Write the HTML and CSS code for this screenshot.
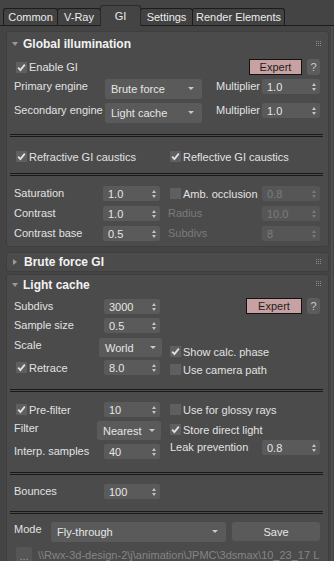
FILE: index.html
```html
<!DOCTYPE html>
<html>
<head>
<meta charset="utf-8">
<link rel="stylesheet" href="styles.css">
</head>
<body>
<div class="tabs">
  <div class="tab t-common">Common</div>
  <div class="tab t-vray">V-Ray</div>
  <div class="tab t-gi active">GI</div>
  <div class="tab t-settings">Settings</div>
  <div class="tab t-re">Render Elements</div>
</div>
<div class="scroll"></div>
<div class="rollouts">
  <section class="panel p-gi">
    <div class="head h-gi">
      <svg class="tri" width="6" height="4" viewBox="0 0 6 4"><path d="M0 0H6L3 4Z" fill="#9a9a9a"/></svg>
      <span class="title">Global illumination</span>
      <svg class="grip" width="5" height="5" viewBox="0 0 5 5"><g fill="#8a8a8a"><rect x="0" y="0" width="1" height="1"/><rect x="2" y="0" width="1" height="1"/><rect x="4" y="0" width="1" height="1"/><rect x="0" y="2" width="1" height="1"/><rect x="2" y="2" width="1" height="1"/><rect x="4" y="2" width="1" height="1"/><rect x="0" y="4" width="1" height="1"/><rect x="2" y="4" width="1" height="1"/><rect x="4" y="4" width="1" height="1"/></g></svg>
    </div>
    <div class="row r-enable">
      <label class="chk ml2"><svg class="cb" width="11" height="11" viewBox="0 0 11 11"><rect width="11" height="11" fill="#5f5f5f"/><path d="M2.2 5.6L4.4 8L8.8 2.6" fill="none" stroke="#e2e2e2" stroke-width="1.8"/></svg><span>Enable GI</span></label>
      <div class="expert e-gi">Expert</div>
      <div class="help">?</div>
    </div>
    <div class="row r-primary">
      <span class="lbl w91">Primary engine</span>
      <div class="dd w97">Brute force</div>
      <span class="lbl w46 ml14">Multiplier</span>
      <div class="spin w58"><span>1.0</span><i class="ud"></i></div>
    </div>
    <div class="row r-secondary">
      <span class="lbl w91">Secondary engine</span>
      <div class="dd w97">Light cache</div>
      <span class="lbl w46 ml14">Multiplier</span>
      <div class="spin w58"><span>1.0</span><i class="ud"></i></div>
    </div>
    <div class="sep s1"></div>
    <div class="row r-caustics">
      <div class="col-l">
        <label class="chk ml2"><svg class="cb" width="11" height="11" viewBox="0 0 11 11"><rect width="11" height="11" fill="#5f5f5f"/><path d="M2.2 5.6L4.4 8L8.8 2.6" fill="none" stroke="#e2e2e2" stroke-width="1.8"/></svg><span>Refractive GI caustics</span></label>
      </div>
      <div class="col-r">
        <label class="chk"><svg class="cb" width="11" height="11" viewBox="0 0 11 11"><rect width="11" height="11" fill="#5f5f5f"/><path d="M2.2 5.6L4.4 8L8.8 2.6" fill="none" stroke="#e2e2e2" stroke-width="1.8"/></svg><span>Reflective GI caustics</span></label>
      </div>
    </div>
    <div class="sep s2"></div>
    <div class="row r-sat">
      <span class="lbl w89">Saturation</span>
      <div class="spin w57"><span>1.0</span><i class="ud"></i></div>
      <label class="chk w92 ml10"><svg class="cb" width="11" height="11" viewBox="0 0 11 11"><rect width="11" height="11" fill="#5f5f5f"/></svg><span>Amb. occlusion</span></label>
      <div class="spin w58 off"><span>0.8</span><i class="ud"></i></div>
    </div>
    <div class="row r-con">
      <span class="lbl w89">Contrast</span>
      <div class="spin w57"><span>1.0</span><i class="ud"></i></div>
      <span class="lbl w94 ml8 dis">Radius</span>
      <div class="spin w58 off"><span>10.0</span><i class="ud"></i></div>
    </div>
    <div class="row r-con">
      <span class="lbl w89">Contrast base</span>
      <div class="spin w57"><span>0.5</span><i class="ud"></i></div>
      <span class="lbl w94 ml8 dis">Subdivs</span>
      <div class="spin w58 off"><span>8</span><i class="ud"></i></div>
    </div>
  </section>

  <section class="panel p-bf">
    <div class="head h-bf">
      <svg class="tri" width="4" height="6" viewBox="0 0 4 6"><path d="M0 0L4 3L0 6Z" fill="#9a9a9a"/></svg>
      <span class="title">Brute force GI</span>
      <svg class="grip" width="5" height="5" viewBox="0 0 5 5"><g fill="#8a8a8a"><rect x="0" y="0" width="1" height="1"/><rect x="2" y="0" width="1" height="1"/><rect x="4" y="0" width="1" height="1"/><rect x="0" y="2" width="1" height="1"/><rect x="2" y="2" width="1" height="1"/><rect x="4" y="2" width="1" height="1"/><rect x="0" y="4" width="1" height="1"/><rect x="2" y="4" width="1" height="1"/><rect x="4" y="4" width="1" height="1"/></g></svg>
    </div>
  </section>

  <section class="panel p-lc">
    <div class="head h-lc">
      <svg class="tri" width="6" height="4" viewBox="0 0 6 4"><path d="M0 0H6L3 4Z" fill="#9a9a9a"/></svg>
      <span class="title">Light cache</span>
      <svg class="grip" width="5" height="5" viewBox="0 0 5 5"><g fill="#8a8a8a"><rect x="0" y="0" width="1" height="1"/><rect x="2" y="0" width="1" height="1"/><rect x="4" y="0" width="1" height="1"/><rect x="0" y="2" width="1" height="1"/><rect x="2" y="2" width="1" height="1"/><rect x="4" y="2" width="1" height="1"/><rect x="0" y="4" width="1" height="1"/><rect x="2" y="4" width="1" height="1"/><rect x="4" y="4" width="1" height="1"/></g></svg>
    </div>
    <div class="group">
      <div class="col-l">
        <div class="row mt5">
          <span class="lbl w90">Subdivs</span>
          <div class="spin w56"><span>3000</span><i class="ud"></i></div>
        </div>
        <div class="row mt4">
          <span class="lbl w90">Sample size</span>
          <div class="spin w56"><span>0.5</span><i class="ud"></i></div>
        </div>
        <div class="row mt5">
          <span class="lbl w85">Scale</span>
          <div class="dd dd-s w63">World</div>
        </div>
        <div class="row mt3">
          <label class="chk ml2 w88"><svg class="cb" width="11" height="11" viewBox="0 0 11 11"><rect width="11" height="11" fill="#5f5f5f"/><path d="M2.2 5.6L4.4 8L8.8 2.6" fill="none" stroke="#e2e2e2" stroke-width="1.8"/></svg><span>Retrace</span></label>
          <div class="spin w56"><span>8.0</span><i class="ud"></i></div>
        </div>
      </div>
      <div class="col-r">
        <div class="row end mt4">
          <div class="expert e-lc">Expert</div>
          <div class="help">?</div>
        </div>
        <div class="row mt30">
          <label class="chk"><svg class="cb" width="11" height="11" viewBox="0 0 11 11"><rect width="11" height="11" fill="#5f5f5f"/><path d="M2.2 5.6L4.4 8L8.8 2.6" fill="none" stroke="#e2e2e2" stroke-width="1.8"/></svg><span>Show calc. phase</span></label>
        </div>
        <div class="row mt3">
          <label class="chk"><svg class="cb" width="11" height="11" viewBox="0 0 11 11"><rect width="11" height="11" fill="#5f5f5f"/></svg><span>Use camera path</span></label>
        </div>
      </div>
    </div>
    <div class="sep s3"></div>
    <div class="group">
      <div class="col-l">
        <div class="row mt10">
          <label class="chk ml2 w88"><svg class="cb" width="11" height="11" viewBox="0 0 11 11"><rect width="11" height="11" fill="#5f5f5f"/><path d="M2.2 5.6L4.4 8L8.8 2.6" fill="none" stroke="#e2e2e2" stroke-width="1.8"/></svg><span>Pre-filter</span></label>
          <div class="spin w56"><span>10</span><i class="ud"></i></div>
        </div>
        <div class="row mt4">
          <span class="lbl w83">Filter</span>
          <div class="dd dd-s w64">Nearest</div>
        </div>
        <div class="row mt4">
          <span class="lbl w90">Interp. samples</span>
          <div class="spin w56"><span>40</span><i class="ud"></i></div>
        </div>
      </div>
      <div class="col-r">
        <div class="row mt10">
          <label class="chk"><svg class="cb" width="11" height="11" viewBox="0 0 11 11"><rect width="11" height="11" fill="#5f5f5f"/></svg><span>Use for glossy rays</span></label>
        </div>
        <div class="row mt5">
          <label class="chk"><svg class="cb" width="11" height="11" viewBox="0 0 11 11"><rect width="11" height="11" fill="#5f5f5f"/><path d="M2.2 5.6L4.4 8L8.8 2.6" fill="none" stroke="#e2e2e2" stroke-width="1.8"/></svg><span>Store direct light</span></label>
        </div>
        <div class="row mt3">
          <span class="lbl w92">Leak prevention</span>
          <div class="spin w58"><span>0.8</span><i class="ud"></i></div>
        </div>
      </div>
    </div>
    <div class="sep s4"></div>
    <div class="row mt9">
      <span class="lbl w90">Bounces</span>
      <div class="spin w56"><span>100</span><i class="ud"></i></div>
    </div>
    <div class="sep s5"></div>
    <div class="row mt8">
      <span class="lbl w37">Mode</span>
      <div class="dd w175">Fly-through</div>
      <div class="save">Save</div>
    </div>
    <div class="row mt5 last">
      <div class="dots">...</div>
      <span class="path">\\Rwx-3d-design-2\j\animation\JPMC\3dsmax\10_23_17 L</span>
    </div>
  </section>
</div>
</body>
</html>
```

FILE: styles.css
```css
* { box-sizing: border-box; }

html, body {
  margin: 0;
  padding: 0;
}

body {
  width: 334px;
  height: 561px;
  overflow: hidden;
  position: relative;
  background: #444444;
  color: #e2e2e2;
  font-family: "Liberation Sans", Arial, sans-serif;
  font-size: 11px;
}

/* tabs */
.tabs {
  display: flex;
  align-items: flex-end;
  height: 26px;
  padding-left: 3px;
  border-bottom: 1px solid #1c1c1c;
}

.tab {
  flex: none;
  height: 17px;
  margin-right: -1px;
  border: 1px solid #1c1c1c;
  border-bottom: 0;
  border-radius: 3px 3px 0 0;
  display: flex;
  align-items: center;
  justify-content: center;
  color: #ececec;
  font-size: 11px;
  background: #424242;
}

.tab.active {
  height: 21px;
  margin-bottom: -1px;
  background: #444444;
  border-color: #2a2a2a;
  position: relative;
  z-index: 1;
}

.t-common { width: 55px; }
.t-vray { width: 44px; }
.t-gi { width: 41px; }
.t-settings { width: 53px; }
.t-re { width: 93px; }

.scroll {
  position: absolute;
  right: 1px;
  top: 26px;
  width: 2px;
  bottom: 0;
  background: #4f4f4f;
}

/* rollouts */
.rollouts {
  padding: 5px 5px 0 6px;
}

.panel {
  background: #4b4b4b;
  border: 1px solid #3e3e3e;
  border-radius: 3px;
  padding: 0 8px 0 7px;
}

.p-gi { padding-bottom: 5px; }
.p-bf { margin-top: 5px; }
.p-lc { margin-top: 2px; }

.head {
  display: flex;
  align-items: center;
  color: #f2f2f2;
  font-weight: bold;
  font-size: 12px;
  margin: 0 -1px;
}

.h-gi { height: 24px; }
.h-bf { height: 18px; }
.h-lc { height: 19px; }

.tri { flex: none; margin-left: -1px; }
.h-bf .tri { margin-left: 0; margin-right: 2px; }
.title { margin-left: 5px; }
.grip { margin-left: auto; margin-top: -2px; margin-right: 0; }

.row {
  display: flex;
  align-items: flex-start;
}

.group {
  display: flex;
  align-items: flex-start;
}

.col-l { width: 146px; flex: none; }
.col-r { width: 150px; flex: none; margin-left: 10px; }

.end { justify-content: flex-end; }

.lbl {
  flex: none;
  height: 15px;
  line-height: 15px;
  white-space: nowrap;
}

.dis { color: #7b7b7b; }

.chk {
  flex: none;
  display: flex;
  align-items: center;
  height: 15px;
  white-space: nowrap;
}

.cb { flex: none; margin-right: 2px; }

.spin {
  flex: none;
  height: 15px;
  background: #5a5a5a;
  border-radius: 2px;
  display: flex;
  align-items: center;
  justify-content: space-between;
  padding: 0 4px 0 5px;
  color: #e6e6e6;
}

.spin.off { background: #565656; color: #7d7d7d; }

.ud {
  display: flex;
  flex-direction: column;
  gap: 2px;
}

.ud::before, .ud::after {
  content: "";
  display: block;
  border-left: 2px solid transparent;
  border-right: 2px solid transparent;
}

.ud::before { border-bottom: 3px solid #c4c4c4; }
.ud::after { border-top: 3px solid #c4c4c4; }
.off .ud::before { border-bottom-color: #7a7a7a; }
.off .ud::after { border-top-color: #7a7a7a; }

.dd {
  flex: none;
  height: 20px;
  background: #5a5a5a;
  border-radius: 2px;
  display: flex;
  align-items: center;
  justify-content: space-between;
  padding: 0 8px 0 6px;
  color: #e6e6e6;
}

.dd-s { height: 19px; padding: 0 6px 0 6px; }

.dd::after {
  content: "";
  border-left: 3px solid transparent;
  border-right: 3px solid transparent;
  border-top: 3px solid #c8c8c8;
  margin-top: -1px;
}

.expert {
  flex: none;
  height: 16px;
  background: #c8a2a2;
  border: 1px solid #121212;
  color: #1e1e1e;
  display: flex;
  align-items: center;
  justify-content: center;
}

.e-gi { width: 53px; margin-left: auto; }
.e-lc { width: 56px; }

.help {
  flex: none;
  width: 13px;
  height: 16px;
  margin-left: 5px;
  background: #5c5c5c;
  border-radius: 3px;
  color: #c9c9c9;
  display: flex;
  align-items: center;
  justify-content: center;
}

.sep {
  height: 3px;
  border-top: 1px solid #1a1a1a;
  border-bottom: 1px solid #1a1a1a;
  margin-left: -4px;
  margin-right: -3px;
}

/* panel 1 vertical rhythm */
.r-enable { margin-top: 3px; height: 16px; align-items: center; }
.r-primary { margin-top: 4px; height: 20px; }
.r-secondary { margin-top: 4px; height: 20px; }
.s1 { margin-top: 11px; }
.r-caustics { margin-top: 12px; }
.s2 { margin-top: 9px; }
.r-sat { margin-top: 10px; }
.r-con { margin-top: 5px; }

/* panel 3 */
.s3 { margin-top: 12px; }
.s4 { margin-top: 13px; }
.s5 { margin-top: 12px; }

.save {
  flex: none;
  width: 88px;
  height: 19px;
  margin-left: 6px;
  background: #5a5a5a;
  border-radius: 3px;
  display: flex;
  align-items: center;
  justify-content: center;
  color: #e6e6e6;
}

.last { align-items: center; height: 16px; }

.dots {
  flex: none;
  width: 16px;
  height: 16px;
  margin-left: 2px;
  background: #565656;
  border-radius: 2px;
  color: #9a9a9a;
  text-align: center;
  line-height: 18px;
}

.path {
  margin-left: 6px;
  color: #858585;
  white-space: nowrap;
}

/* helpers */
.ml2 { margin-left: 2px; }
.ml8 { margin-left: 8px; }
.ml10 { margin-left: 10px; }
.ml14 { margin-left: 14px; }
.mt3 { margin-top: 3px; }
.mt4 { margin-top: 4px; }
.mt5 { margin-top: 5px; }
.mt8 { margin-top: 8px; }
.mt9 { margin-top: 9px; }
.mt10 { margin-top: 10px; }
.mt30 { margin-top: 30px; }

.w37 { width: 37px; }
.w46 { width: 46px; }
.w56 { width: 56px; }
.w57 { width: 57px; }
.w58 { width: 58px; }
.w63 { width: 63px; }
.w64 { width: 64px; }
.w83 { width: 83px; }
.w85 { width: 85px; }
.w88 { width: 88px; }
.w89 { width: 89px; }
.w90 { width: 90px; }
.w91 { width: 91px; }
.w92 { width: 92px; }
.w94 { width: 94px; }
.w97 { width: 97px; }
.w175 { width: 175px; }
```
